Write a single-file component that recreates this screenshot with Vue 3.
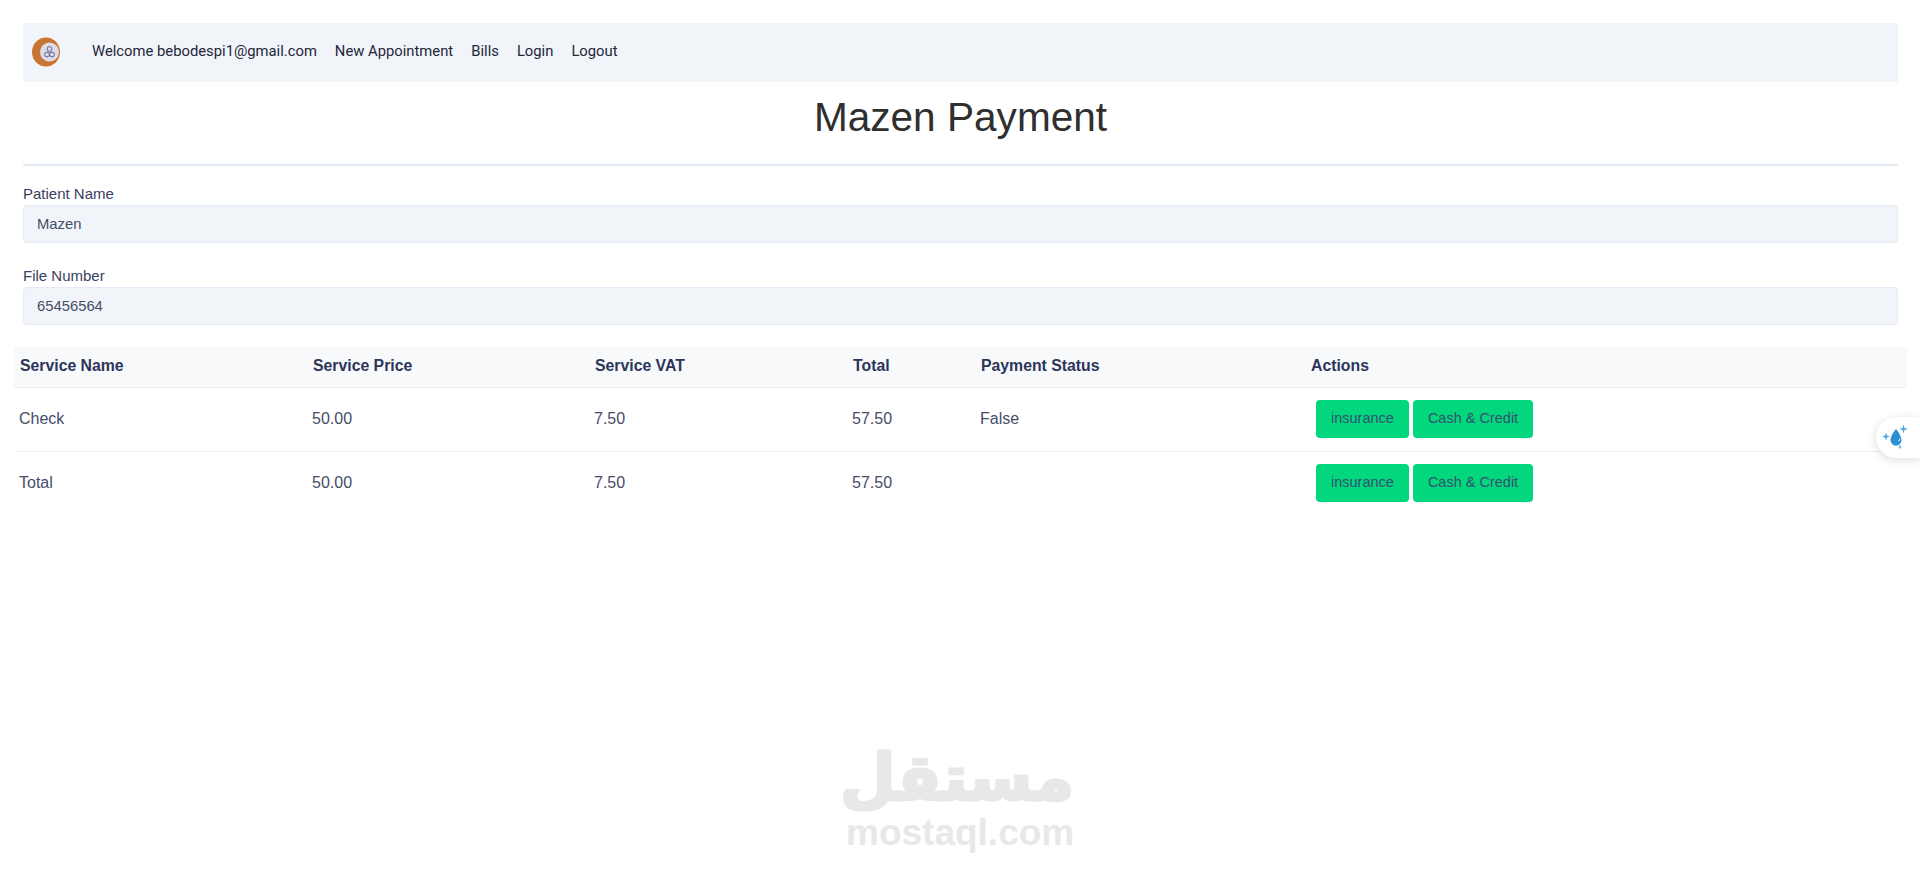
<script setup>
const rows = [
  { name: 'Check', price: '50.00', vat: '7.50', total: '57.50', status: 'False' },
  { name: 'Total', price: '50.00', vat: '7.50', total: '57.50', status: '' },
]
</script>

<template>
  <div class="page">
    <nav class="navbar">
      <svg class="logo" width="28" height="30" viewBox="0 0 28 30">
        <ellipse cx="14" cy="15" rx="14" ry="14.5" fill="#c87433" />
        <circle cx="17.500" cy="15" r="9.5" fill="#dddde6" />
        <circle cx="17.500" cy="12" r="2.4" fill="none" stroke="#6a5f9a" stroke-width="1" />
        <circle cx="15" cy="17.500" r="2.4" fill="none" stroke="#5f5a98" stroke-width="1" />
        <circle cx="20" cy="17.500" r="2.4" fill="none" stroke="#5f5a98" stroke-width="1" />
      </svg>
      <a class="nav-link">Welcome bebodespi1@gmail.com</a>
      <a class="nav-link">New Appointment</a>
      <a class="nav-link">Bills</a>
      <a class="nav-link">Login</a>
      <a class="nav-link">Logout</a>
    </nav>

    <h1 class="title">Mazen Payment</h1>
    <hr class="rule" />

    <div class="field">
      <label class="label">Patient Name</label>
      <div class="input">Mazen</div>
    </div>
    <div class="field second">
      <label class="label">File Number</label>
      <div class="input">65456564</div>
    </div>

    <table class="table">
      <colgroup>
        <col style="width: 293px" />
        <col style="width: 282px" />
        <col style="width: 258px" />
        <col style="width: 128px" />
        <col style="width: 330px" />
        <col />
      </colgroup>
      <thead>
        <tr>
          <th>Service Name</th>
          <th>Service Price</th>
          <th>Service VAT</th>
          <th>Total</th>
          <th>Payment Status</th>
          <th>Actions</th>
        </tr>
      </thead>
      <tbody>
        <tr v-for="row in rows" :key="row.name">
          <td>{{ row.name }}</td>
          <td>{{ row.price }}</td>
          <td>{{ row.vat }}</td>
          <td>{{ row.total }}</td>
          <td>{{ row.status }}</td>
          <td>
            <div class="actions">
              <button class="btn">insurance</button>
              <button class="btn">Cash &amp; Credit</button>
            </div>
          </td>
        </tr>
      </tbody>
    </table>

    <div class="widget">
      <svg width="28" height="28" viewBox="0 0 28 28">
        <path d="M14 6 C14 6 8.500 12.500 8.500 17 A5.500 5.800 0 0 0 19.500 17 C19.500 12.500 14 6 14 6 Z" fill="#2b8fd6" />
        <path d="M16.500 18 q1.300 -.5 1.300 -2.500" fill="none" stroke="#cfe8fa" stroke-width="1.100" />
        <path d="M4 9.500 L5 12.500 L8 13.500 L5 14.500 L4 17.500 L3 14.500 L0 13.500 L3 12.500 Z" fill="#4da6e6" />
        <path d="M21.500 1.500 L22.500 5 L26 6 L22.500 7 L21.500 10.500 L20.500 7 L17 6 L20.500 5 Z" fill="#4da6e6" />
        <path d="M18 21.500 L18.600 23.400 L20.500 24 L18.600 24.600 L18 26.500 L17.400 24.600 L15.500 24 L17.400 23.400 Z" fill="#4da6e6" />
      </svg>
    </div>

    <div class="watermark">
      <div class="wm-ar" lang="ar" dir="rtl">مستقل</div>
      <div class="wm-en">mostaql.com</div>
    </div>
  </div>
</template>

<style>
html, body { margin: 0; background: #fff; }
</style>

<style scoped>
.page {
  position: relative;
  height: 869px;
  overflow: hidden;
  box-sizing: border-box;
  padding: 23px 22px 0 23px;
  font-family: "Liberation Sans", Arial, sans-serif;
  color: #2d3559;
}
.navbar {
  display: flex;
  align-items: center;
  height: 59px;
  background: #f1f4f9;
  padding-left: 9px;
  padding-bottom: 3px;
  box-sizing: border-box;
}
.logo { margin: 2px 23px 0 0; flex: none; }
.nav-link {
  font-family: Roboto, sans-serif;
  font-size: 14.8px;
  color: #23273a;
  padding: 0 9px;
}
.title {
  margin: 0;
  height: 82px;
  line-height: 71px;
  text-align: center;
  font-size: 40.6px;
  font-weight: 400;
  color: #2f2f2f;
}
.rule {
  margin: 0 0 19px;
  border: 0;
  height: 2px;
  background: #e2ebf6;
}
.field { display: flex; flex-direction: column; }
.second { margin-top: 24px; }
.label { font-size: 15px; line-height: 18px; padding-bottom: 2px; color: #3a4160; }
.input {
  box-sizing: border-box;
  height: 38px;
  line-height: 36px;
  padding: 0 13px;
  background: #f1f4f9;
  border: 1px solid #e2ebf6;
  border-radius: 4px;
  font-size: 14.8px;
  color: #454d69;
}
.table {
  width: 1893px;
  margin: 22px 0 0 -9px;
  border-collapse: collapse;
  table-layout: fixed;
  font-size: 16px;
}
th {
  height: 40px;
  box-sizing: border-box;
  padding: 0 6px 2px;
  text-align: left;
  font-size: 15.8px;
  font-weight: 700;
  color: #2d3559;
  background: #f7f9fb;
  border-bottom: 1px solid #ecf0f6;
}
td {
  height: 64px;
  box-sizing: border-box;
  padding: 0 5px;
  color: #454d69;
  border-bottom: 1px solid #ecf0f6;
}
tbody tr:last-child td { border-bottom: 0; }
.actions { display: flex; gap: 4px; padding-left: 6px; }
.btn {
  height: 38px;
  padding: 0 15px 3px;
  border: 0;
  border-radius: 4px;
  background: #02d77e;
  color: #33526e;
  font: 14.5px "Liberation Sans", Arial, sans-serif;
}
.widget {
  position: absolute;
  top: 417px;
  right: 0;
  width: 44px;
  height: 41px;
  box-sizing: border-box;
  padding: 6px 0 0 6px;
  background: #fff;
  border-radius: 21px 0 0 21px;
  box-shadow: 0 2px 10px rgba(0, 0, 0, .14);
}
.watermark {
  position: absolute;
  left: 846px;
  top: 741px;
  width: 228px;
  text-align: center;
  color: #e8e8e8;
}
.wm-ar {
  font-family: "DejaVu Sans", sans-serif;
  font-weight: 700;
  font-size: 64px;
  line-height: 74px;
  -webkit-text-stroke: 3px #e8e8e8;
}
.wm-en {
  font-family: "Liberation Sans", Arial, sans-serif;
  font-weight: 700;
  font-size: 37px;
  line-height: 36px;
}
</style>
